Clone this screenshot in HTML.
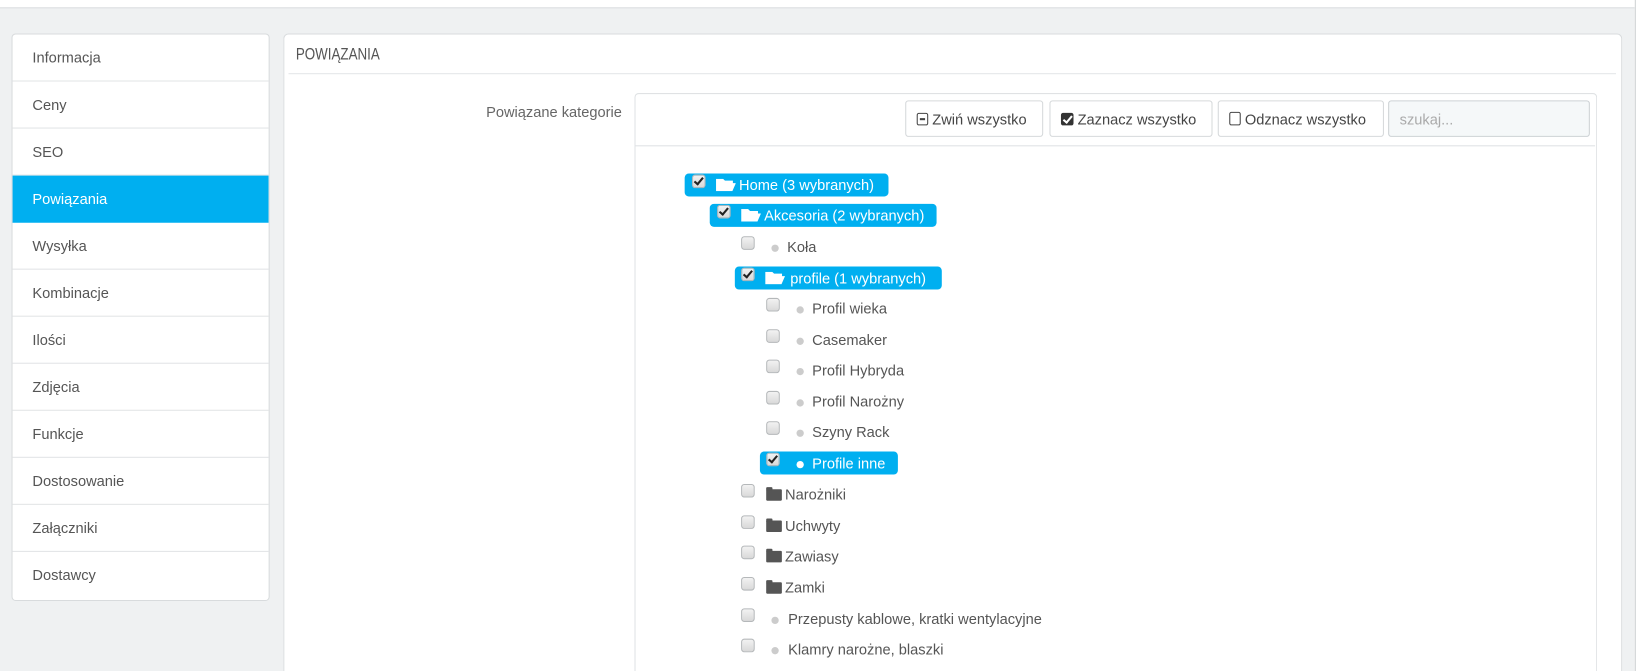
<!DOCTYPE html>
<html><head><meta charset="utf-8"><style>
html,body{margin:0;padding:0;width:1639px;height:671px;overflow:hidden;background:#eff1f2;font-family:"Liberation Sans",sans-serif;}
#w{position:absolute;left:0;top:0;width:1568px;height:642px;overflow:hidden;transform:scale(1.04528);transform-origin:0 0;}
.a{position:absolute}
.top{left:0;top:0;width:1564px;height:7px;background:#fff;border-bottom:1px solid #d8dbdd}
.rs{left:1564px;top:0;width:4px;height:642px;background:#fff;border-left:1px solid #d0d3d5}
.side{left:11px;top:32px;width:245px;height:541px;background:#fff;border:1px solid #d8dbdd;border-radius:4px;overflow:hidden}
.side div{height:44px;border-bottom:1px solid #e2e4e6;line-height:44px;padding-left:19px;font-size:14px;color:#555}
.side div:last-child{border-bottom:none}
.side .on{background:#00aff0;color:#fff;border-bottom-color:#00aff0}
.panel{left:271px;top:32px;width:1279px;height:610px;background:#fff;border:1px solid #d8dbdd;border-bottom:none;border-radius:5px 5px 0 0}
.tree{left:607px;top:89px;width:919px;height:553px;border:1px solid #dfe2e4;border-bottom:none;border-radius:4px 4px 0 0;background:#fff}
.btn{position:absolute;top:96px;height:35px;border:1px solid #d6d9db;border-radius:3px;background:#fff;font-size:14px;color:#444;line-height:35px;box-sizing:border-box;padding-left:10px}
.row{position:absolute;height:22px;line-height:22px;font-size:14px;color:#555;white-space:nowrap}
.cb{position:absolute;top:1px;width:13px;height:13px;border:1px solid #b5b8ba;border-radius:3px;background:linear-gradient(#f2f2f2,#d9d9d9);box-sizing:border-box}
.cb.k::after{content:"";position:absolute;left:3px;top:0px;width:3px;height:7px;border:solid #222;border-width:0 2px 2px 0;transform:rotate(40deg)}
.dot{position:absolute;top:9px;width:7px;height:7px;border-radius:50%;background:#ccc}
.pill{position:absolute;height:22px;background:#00aff0;border-radius:4px}
.fo{position:absolute;top:6px;width:15px;height:11px;background:#555;border-radius:1px}
.fo::before{content:"";position:absolute;left:0;top:-2px;width:6px;height:3px;background:#555;border-radius:1px 1px 0 0}
.of{position:absolute;left:23px;top:5px;width:19px;height:12px;background:#fff;clip-path:polygon(0 0,35% 0,45% 15%,85% 15%,85% 35%,100% 35%,82% 100%,0 100%)}
</style></head><body><div id="w">
<div class="a top"></div>
<div class="a rs"></div>
<div class="a side">
<div>Informacja</div><div>Ceny</div><div>SEO</div><div class="on">Powiązania</div><div>Wysyłka</div><div>Kombinacje</div><div>Ilości</div><div>Zdjęcia</div><div>Funkcje</div><div>Dostosowanie</div><div>Załączniki</div><div>Dostawcy</div>
</div>
<div class="a panel"></div>
<div class="a" style="left:283px;top:44px;font-size:16px;color:#555;transform:scaleX(0.8);transform-origin:0 0">POWIĄZANIA</div>
<div class="a" style="left:276px;top:70px;width:1270px;height:1px;background:#e4e6e8"></div>
<div class="a" style="left:380px;top:99px;width:215px;text-align:right;font-size:14px;color:#666">Powiązane kategorie</div>
<div class="a tree"></div>
<div class="a" style="left:608px;top:139px;width:918px;height:1px;background:#dfe2e4"></div>
<div class="btn" style="left:866px;width:132px"><span style="display:inline-block;width:9px;height:10px;border:1px solid #444;border-radius:2px;vertical-align:-1px;position:relative"><span style="position:absolute;left:2px;top:4px;width:5px;height:1.5px;background:#444"></span></span> Zwiń wszystko</div>
<div class="btn" style="left:1004px;width:156px"><span style="display:inline-block;width:12px;height:12px;background:#333;border-radius:2px;vertical-align:-1px;position:relative"><span style="position:absolute;left:4px;top:1px;width:3px;height:7px;border:solid #fff;border-width:0 2px 2px 0;transform:rotate(40deg)"></span></span> Zaznacz wszystko</div>
<div class="btn" style="left:1165px;width:159px"><span style="display:inline-block;width:9px;height:11px;border:1px solid #444;border-radius:2px;vertical-align:-1px"></span> Odznacz wszystko</div>
<div class="btn" style="left:1328px;width:193px;background:#f5f8f9;color:#aaa;border-color:#cdd2d5">szukaj...</div>

<div class="pill" style="left:655px;top:166px;width:195px"></div>
<div class="pill" style="left:679px;top:195px;width:217px"></div>
<div class="pill" style="left:703px;top:255px;width:198px"></div>
<div class="pill" style="left:727px;top:432px;width:132px"></div>

<div class="row" style="left:662px;top:166px;color:#fff"><span class="cb k" style="left:0"></span><span class="of"></span><span style="position:absolute;left:45px">Home (3 wybranych)</span></div>
<div class="row" style="left:686px;top:195px;color:#fff"><span class="cb k" style="left:0"></span><span class="of"></span><span style="position:absolute;left:45px">Akcesoria (2 wybranych)</span></div>
<div class="row" style="left:709px;top:225px"><span class="cb" style="left:0"></span><span class="dot" style="left:29px"></span><span style="position:absolute;left:44px">Koła</span></div>
<div class="row" style="left:709px;top:255px;color:#fff"><span class="cb k" style="left:0"></span><span class="of"></span><span style="position:absolute;left:47px">profile (1 wybranych)</span></div>
<div class="row" style="left:733px;top:284px"><span class="cb" style="left:0"></span><span class="dot" style="left:29px"></span><span style="position:absolute;left:44px">Profil wieka</span></div>
<div class="row" style="left:733px;top:314px"><span class="cb" style="left:0"></span><span class="dot" style="left:29px"></span><span style="position:absolute;left:44px">Casemaker</span></div>
<div class="row" style="left:733px;top:343px"><span class="cb" style="left:0"></span><span class="dot" style="left:29px"></span><span style="position:absolute;left:44px">Profil Hybryda</span></div>
<div class="row" style="left:733px;top:373px"><span class="cb" style="left:0"></span><span class="dot" style="left:29px"></span><span style="position:absolute;left:44px">Profil Narożny</span></div>
<div class="row" style="left:733px;top:402px"><span class="cb" style="left:0"></span><span class="dot" style="left:29px"></span><span style="position:absolute;left:44px">Szyny Rack</span></div>
<div class="row" style="left:733px;top:432px;color:#fff"><span class="cb k" style="left:0"></span><span class="dot" style="left:29px;background:#fff"></span><span style="position:absolute;left:44px">Profile inne</span></div>
<div class="row" style="left:709px;top:462px"><span class="cb" style="left:0"></span><span class="fo" style="left:24px"></span><span style="position:absolute;left:42px">Narożniki</span></div>
<div class="row" style="left:709px;top:492px"><span class="cb" style="left:0"></span><span class="fo" style="left:24px"></span><span style="position:absolute;left:42px">Uchwyty</span></div>
<div class="row" style="left:709px;top:521px"><span class="cb" style="left:0"></span><span class="fo" style="left:24px"></span><span style="position:absolute;left:42px">Zawiasy</span></div>
<div class="row" style="left:709px;top:551px"><span class="cb" style="left:0"></span><span class="fo" style="left:24px"></span><span style="position:absolute;left:42px">Zamki</span></div>
<div class="row" style="left:709px;top:581px"><span class="cb" style="left:0"></span><span class="dot" style="left:29px"></span><span style="position:absolute;left:45px">Przepusty kablowe, kratki wentylacyjne</span></div>
<div class="row" style="left:709px;top:610px"><span class="cb" style="left:0"></span><span class="dot" style="left:29px"></span><span style="position:absolute;left:45px">Klamry narożne, blaszki</span></div>
</div></body></html>
